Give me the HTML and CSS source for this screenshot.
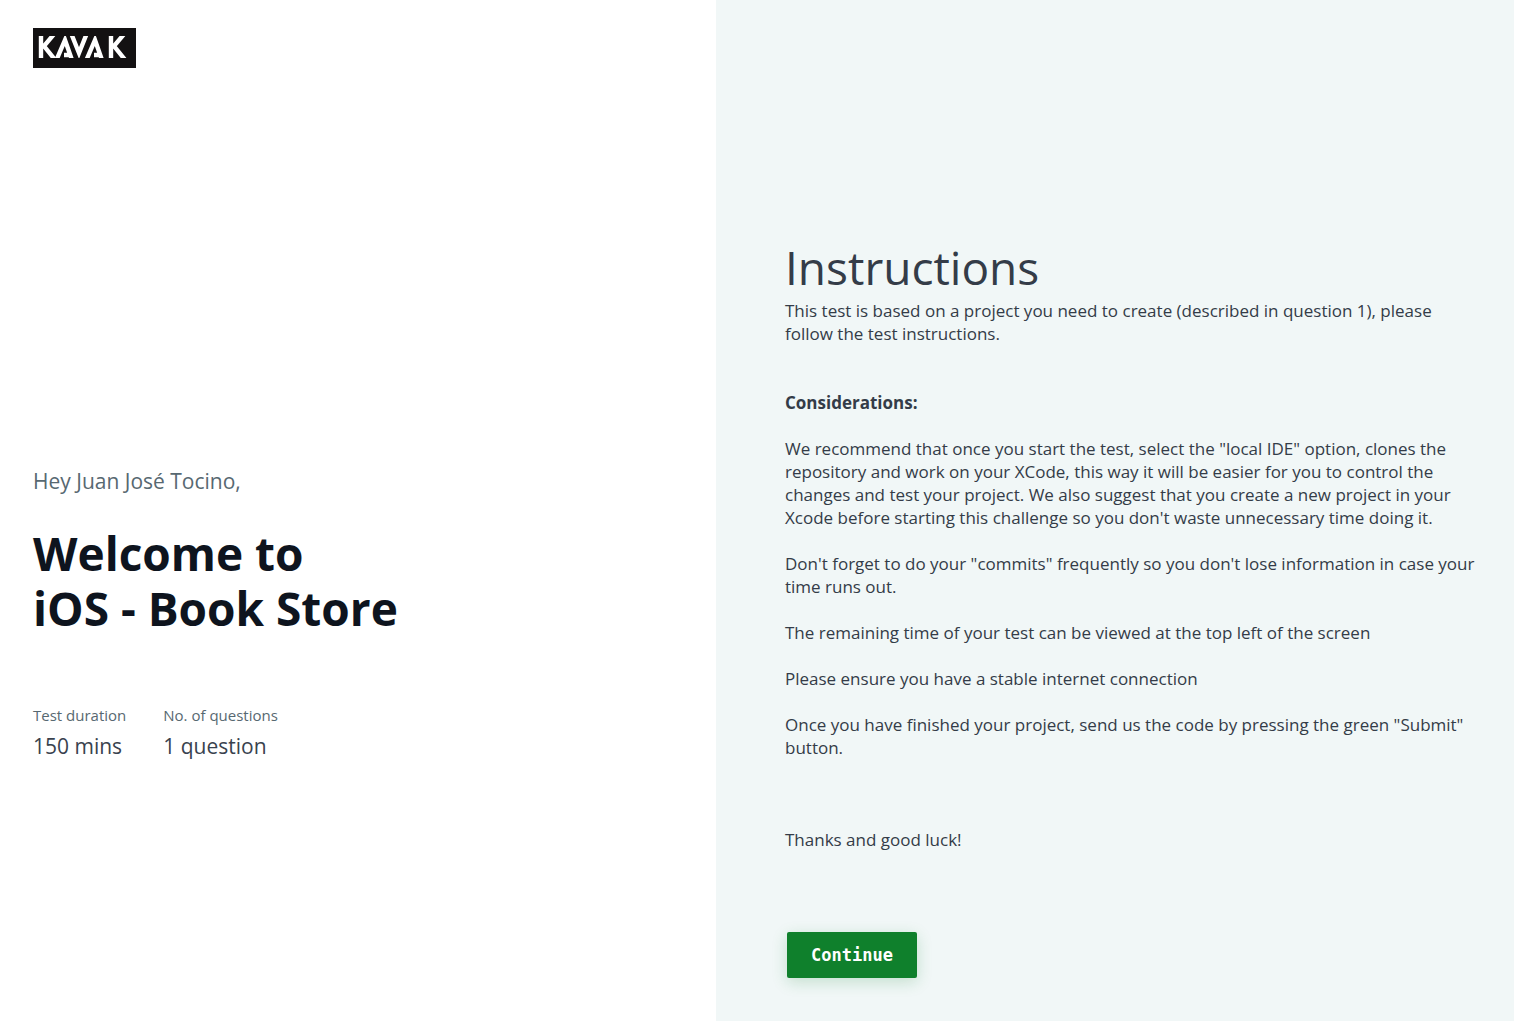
FILE: index.html
```html
<!DOCTYPE html>
<html lang="en">
<head>
<meta charset="utf-8">
<title>iOS - Book Store</title>
<link rel="stylesheet" href="styles.css">
</head>
<body>
<div class="page">
  <section class="intro">
    <svg class="logo" viewBox="0 0 103 40" role="img" aria-label="Kavak">
      <rect width="103" height="40" fill="#131112"/>
      <clipPath id="wordmark"><rect x="0" y="8" width="103" height="22"/></clipPath>
      <g fill="none" stroke="#fff" stroke-width="4.4" clip-path="url(#wordmark)">
        <path d="M8 6V32M22 5L11 18L23 33"/>
        <path d="M23 33L32 12L39 32M31 27H37"/>
        <path d="M38 5L46 25L54 5"/>
        <path d="M53 33L62 12L69 32M61 27H67"/>
        <path d="M78 6V32M92 5L81 18L93 33"/>
      </g>
    </svg>
    <div class="welcome">
      <p class="greeting">Hey Juan José Tocino,</p>
      <h1 class="title">Welcome to<br>iOS - Book Store</h1>
      <dl class="facts">
        <div><dt>Test duration</dt><dd>150 mins</dd></div>
        <div><dt>No. of questions</dt><dd>1 question</dd></div>
      </dl>
    </div>
  </section>
  <main class="instructions">
    <h2 class="heading">Instructions</h2>
    <p class="lead">This test is based on a project you need to create (described in question 1), please follow the test instructions.</p>
    <h3 class="subheading">Considerations:</h3>
    <p>We recommend that once you start the test, select the "local IDE" option, clones the repository and work on your XCode, this way it will be easier for you to control the changes and test your project. We also suggest that you create a new project in your Xcode before starting this challenge so you don't waste unnecessary time doing it.</p>
    <p>Don't forget to do your "commits" frequently so you don't lose information in case your time runs out.</p>
    <p>The remaining time of your test can be viewed at the top left of the screen</p>
    <p>Please ensure you have a stable internet connection</p>
    <p>Once you have finished your project, send us the code by pressing the green "Submit" button.</p>
    <p class="closing">Thanks and good luck!</p>
    <button class="continue" type="button">Continue</button>
  </main>
</div>
</body>
</html>
```
FILE: styles.css
```css
* { box-sizing: border-box; }
body { margin: 0; font-family: "Open Sans", sans-serif; color: #39424e; background: #fff; }
h1, h2, h3, p, dl, dd { margin: 0; }
.page { display: grid; grid-template-columns: 716fr 798fr; min-height: 100vh; }
.intro { display: flex; flex-direction: column; padding: 28px 33px; }
.logo { width: 103px; height: 40px; }
.welcome { margin-top: 398px; }
.greeting { font-size: 21px; line-height: 30px; color: #576871; }
.title { margin-top: 30px; font-size: 46px; line-height: 55px; font-weight: 700; color: #0e141e; }
.facts { display: flex; gap: 37px; margin-top: 68px; }
.facts dt { font-size: 15px; line-height: 22px; color: #576871; }
.facts dd { margin-top: 5px; font-size: 21px; line-height: 30px; color: #39424e; }
.instructions { padding: 237px 36px 43px 69px; background: #f1f7f7; font-size: 17px; line-height: 23px; color: #343c48; }
.instructions p { margin-bottom: 23px; }
.heading { margin-bottom: 2px; font-size: 46px; line-height: 60px; font-weight: 400; }
.subheading { margin: 46px 0 23px; font-size: 17px; font-weight: 700; }
.instructions .closing { margin: 69px 0 81px; }
.continue { display: block; width: 130px; height: 46px; margin-left: 2px; border: 0; border-radius: 2px; background: #0f802c; color: #fff; font: 700 17px/22px "DejaVu Sans Mono", monospace; box-shadow: 0 4px 16px rgba(15, 128, 44, 0.2); cursor: pointer; }
```
